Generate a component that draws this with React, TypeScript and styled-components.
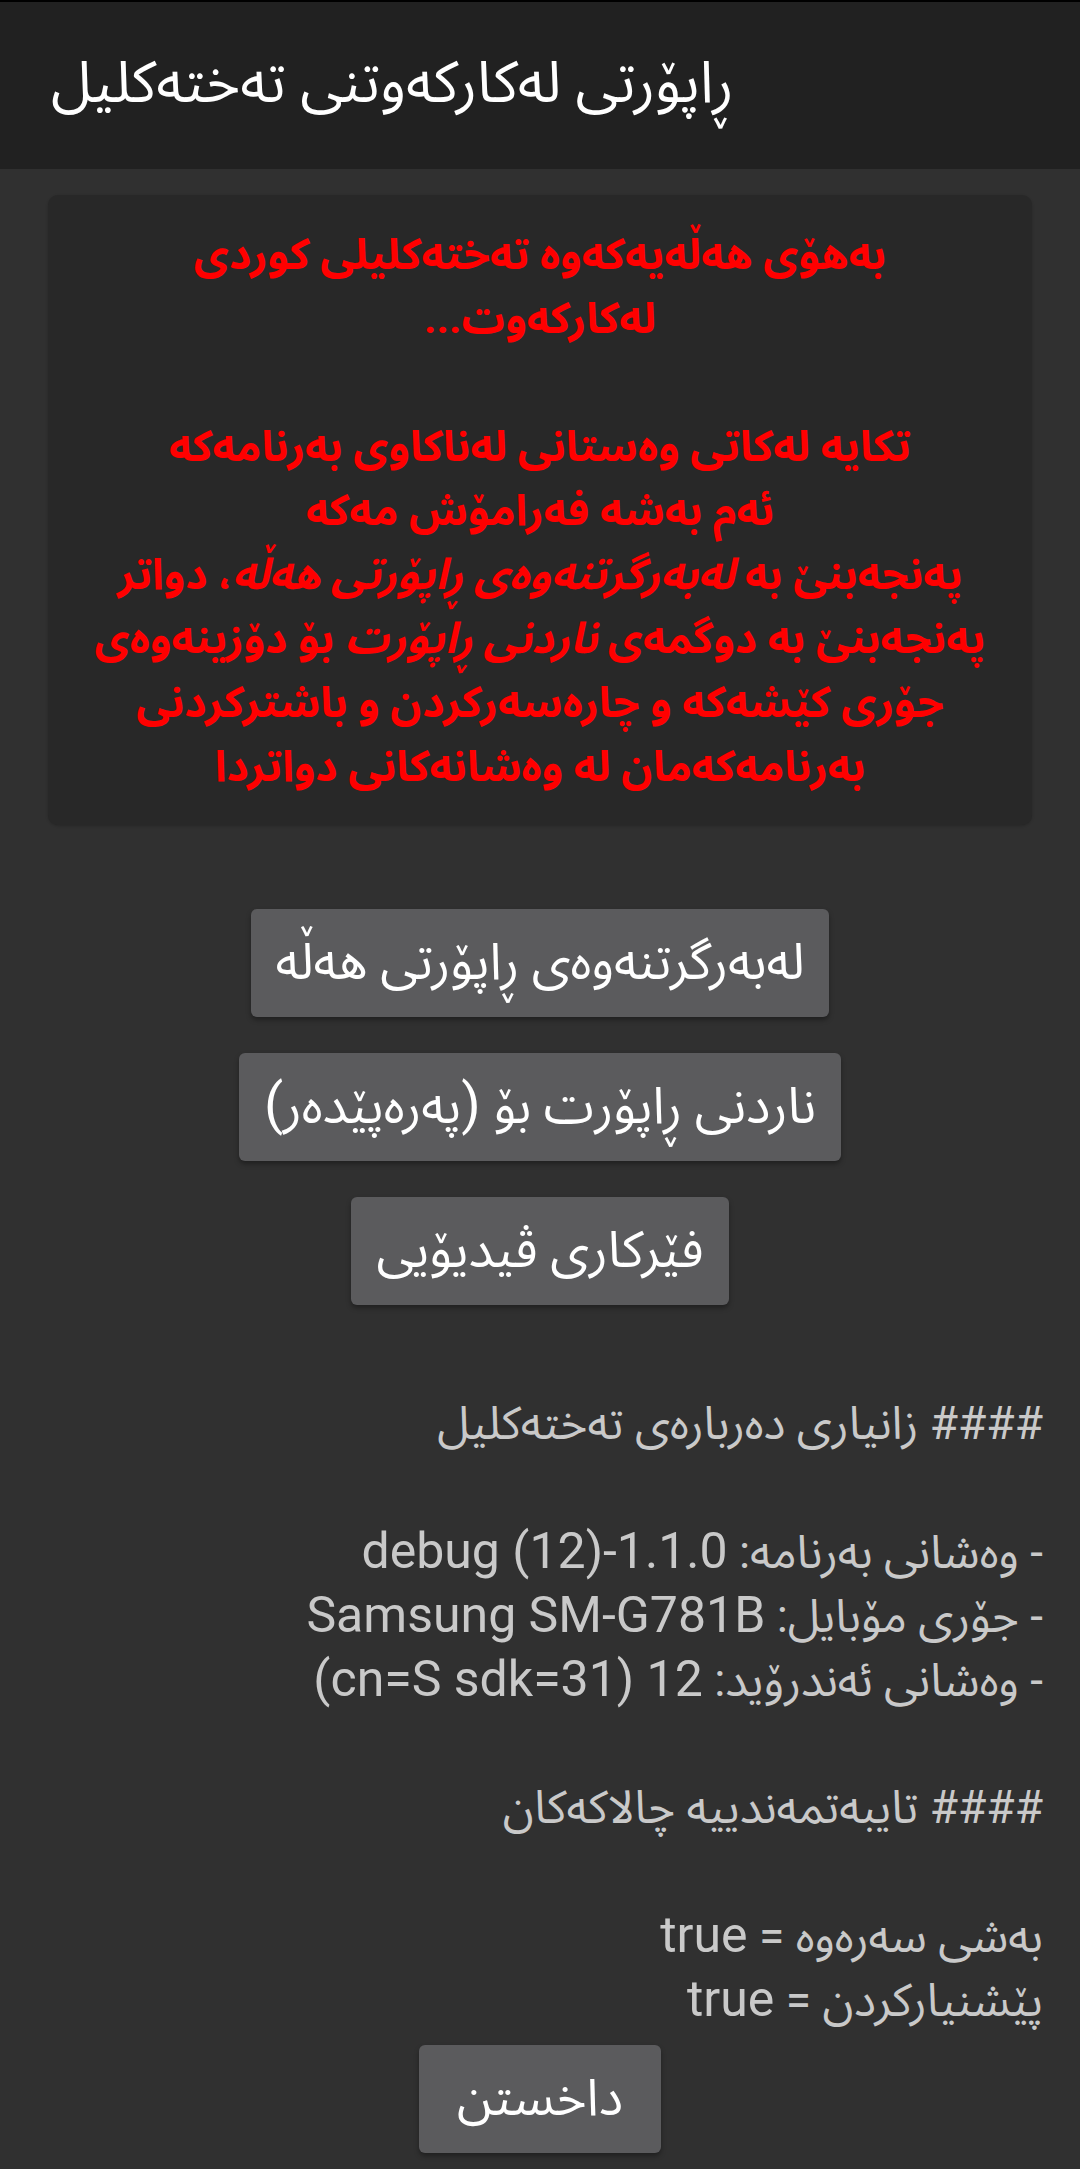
import React from "react";
import styled, { createGlobalStyle } from "styled-components";

const GlobalStyle = createGlobalStyle`
  html, body {
    margin: 0;
    padding: 0;
    background: #303030;
  }
  body {
    font-family: Roboto, "Noto Sans Arabic", "DejaVu Sans", sans-serif;
  }
  * { box-sizing: border-box; }
`;

const Page = styled.div`
  width: 1080px;
  min-height: 2169px;
  background: #303030;
  display: flex;
  flex-direction: column;
`;

const TopBar = styled.header`
  height: 169px;
  background: #212121;
  border-top: 2px solid #000;
  display: flex;
  align-items: center;
  justify-content: flex-start;
  padding-left: 51px;
  padding-bottom: 4px;
`;

const Title = styled.h1`
  margin: 0;
  color: #ffffff;
  font-size: 58px;
  font-weight: 400;
  direction: rtl;
`;

const Content = styled.main`
  display: flex;
  flex-direction: column;
  align-items: center;
  padding: 26px 48px 18px;
`;

const WarningCard = styled.section`
  width: 984px;
  background: #282828;
  border-radius: 10px;
  padding: 27px 10px;
  display: flex;
  flex-direction: column;
  align-items: center;
  direction: rtl;
  box-shadow: 0 1px 3px rgba(0, 0, 0, 0.2);
`;

const WarningLine = styled.div`
  color: #ff0000;
  font-weight: 700;
  font-size: 43px;
  line-height: 64px;
  height: 64px;
  white-space: nowrap;
  text-align: center;
`;

const Em = styled.i`
  font-style: italic;
`;

const ButtonStack = styled.div`
  margin-top: 84px;
  display: flex;
  flex-direction: column;
  align-items: center;
  gap: 36px;
`;

const ActionButton = styled.button<{ $wide?: boolean }>`
  height: 108px;
  padding: 0 ${(p) => (p.$wide ? "38px" : "25px")};
  background: #5b5b5d;
  color: #ffffff;
  border: none;
  border-radius: 6px;
  font-family: inherit;
  font-size: 51px;
  direction: rtl;
  box-shadow: 0 3px 5px rgba(0, 0, 0, 0.35);
  white-space: nowrap;
`;

const Paren = styled.span`
  font-size: 56px;
`;

const InfoBlock = styled.div`
  margin-top: 86px;
  align-self: stretch;
  margin-right: -11px;
  direction: rtl;
  text-align: right;
  color: #c9c9c9;
  font-size: 46px;
  line-height: 64px;
`;

const InfoLine = styled.div`
  height: 64px;
  white-space: nowrap;
`;

const Latin = styled.span`
  font-family: Roboto, sans-serif;
  font-size: 50px;
`;

const CloseWrap = styled.div`
  margin-top: 14px;
  display: flex;
  justify-content: center;
`;

type Info = { ar: string; lat?: string };

const infoLines: Info[] = [
  { ar: "#### زانیاری دەربارەی تەختەکلیل" },
  { ar: "" },
  { ar: "- وەشانی بەرنامە: ", lat: "debug (12)-1.1.0" },
  { ar: "- جۆری مۆبایل: ", lat: "Samsung SM-G781B" },
  { ar: "- وەشانی ئەندرۆید: ", lat: "12 (cn=S sdk=31)" },
  { ar: "" },
  { ar: "#### تایبەتمەندییە چالاکەکان" },
  { ar: "" },
  { ar: "بەشی سەرەوە = ", lat: "true" },
  { ar: "پێشنیارکردن = ", lat: "true" },
];

export default function App() {
  return (
    <Page>
      <GlobalStyle />
      <TopBar>
        <Title>ڕاپۆرتی لەکارکەوتنی تەختەکلیل</Title>
      </TopBar>
      <Content>
        <WarningCard>
          <WarningLine>بەهۆی هەڵەیەکەوە تەختەکلیلی کوردی</WarningLine>
          <WarningLine>لەکارکەوت...</WarningLine>
          <WarningLine />
          <WarningLine>تکایە لەکاتی وەستانی لەناکاوی بەرنامەکە</WarningLine>
          <WarningLine>ئەم بەشە فەرامۆش مەکە</WarningLine>
          <WarningLine>
            پەنجەبنێ بە <Em>لەبەرگرتنەوەی ڕاپۆرتی هەڵە</Em>، دواتر
          </WarningLine>
          <WarningLine>
            پەنجەبنێ بە دوگمەی <Em>ناردنی ڕاپۆرت</Em> بۆ دۆزینەوەی
          </WarningLine>
          <WarningLine>جۆری کێشەکە و چارەسەرکردن و باشترکردنی</WarningLine>
          <WarningLine>بەرنامەکەمان لە وەشانەکانی دواتردا</WarningLine>
        </WarningCard>

        <ButtonStack>
          <ActionButton>لەبەرگرتنەوەی ڕاپۆرتی هەڵە</ActionButton>
          <ActionButton>
            ناردنی ڕاپۆرت بۆ <Paren>(</Paren>پەرەپێدەر<Paren>)</Paren>
          </ActionButton>
          <ActionButton>فێرکاری ڤیدیۆیی</ActionButton>
        </ButtonStack>

        <InfoBlock>
          {infoLines.map((line, i) => (
            <InfoLine key={i}>
              {line.ar}
              {line.lat && <Latin>{line.lat}</Latin>}
            </InfoLine>
          ))}
        </InfoBlock>

        <CloseWrap>
          <ActionButton $wide>داخستن</ActionButton>
        </CloseWrap>
      </Content>
    </Page>
  );
}
